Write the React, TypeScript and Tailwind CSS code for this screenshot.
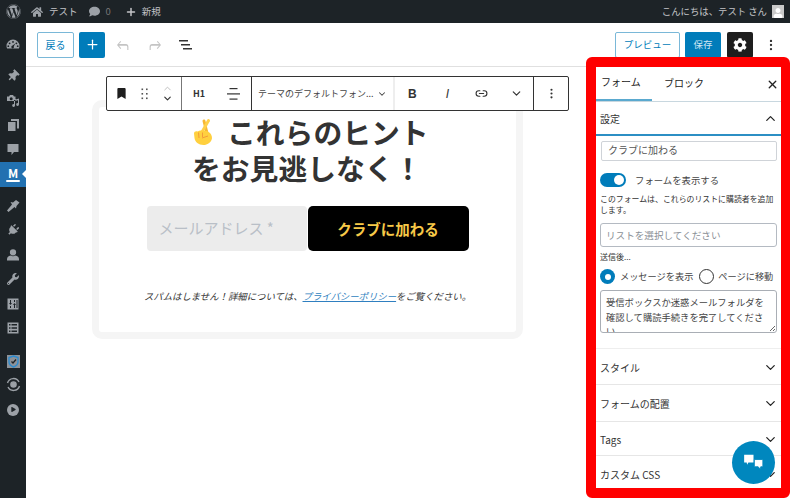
import { ChevronDown, ChevronUp, Link2, MoreVertical, Plus, X } from 'lucide-react';
import { FaBookmark, FaCog, FaComment, FaHome, FaPlay, FaPlug, FaThumbtack, FaUser, FaWordpress, FaWrench } from 'react-icons/fa';
import type { ReactNode } from 'react';

function NavItem({ children, className = '' }: { children: ReactNode; className?: string }) {
  return <div className={`flex h-[24.5px] items-center justify-center text-[#9ca1a7] ${className}`}>{children}</div>;
}

function Section({ title, className = '' }: { title: string; className?: string }) {
  return (
    <div className={`flex items-center justify-between border-b border-[#e6e6e6] pl-[4px] pr-[3px] pt-[1px] text-[10px] text-[#333] ${className}`}>
      <span>{title}</span>
      <ChevronDown size={15} strokeWidth={2} className="text-[#222]" />
    </div>
  );
}

function Handle() {
  return (
    <svg width="8" height="12" viewBox="0 0 8 12" className="fill-[#555]">
      <rect x="0.5" y="0.5" width="1.6" height="1.6" /><rect x="5" y="0.5" width="1.6" height="1.6" />
      <rect x="0.5" y="5" width="1.6" height="1.6" /><rect x="5" y="5" width="1.6" height="1.6" />
      <rect x="0.5" y="9.5" width="1.6" height="1.6" /><rect x="5" y="9.5" width="1.6" height="1.6" />
    </svg>
  );
}

function FingersCrossed() {
  return (
    <svg width="20" height="27" viewBox="0 0 20 27" fill="none">
      <path d="M11 3 14 15" stroke="#f7b733" strokeWidth="3" strokeLinecap="round" />
      <path d="M15.5 2.5 8.5 15" stroke="#ffd04a" strokeWidth="3" strokeLinecap="round" />
      <path d="M1 15.5C1 13.5 3 13 4.5 13.5L7 12.5 14 13 17 15C19 17.5 19.5 20 18.5 22 17 25.5 13.5 27 10.5 27 5.5 27 2 24 1.5 20Z" fill="#ffd03f" />
      <path d="M5.5 14.5 6 20M9.5 14.5 9.5 19M9 20 15 18" stroke="#f0953a" strokeWidth="0.9" />
    </svg>
  );
}

function Dash({ d }: { d: string }) {
  return (
    <svg width="14" height="14" viewBox="0 0 14 14" className="fill-current" fillRule="evenodd">
      <path d={d} />
    </svg>
  );
}

export default function App() {
  return (
    <div className="relative flex h-[498px] w-[790px] flex-col overflow-hidden bg-white font-['Noto_Sans_CJK_JP','Noto_Sans',sans-serif]">
      <div className="flex h-[23px] shrink-0 items-center bg-[#1d2327] text-[9.5px] text-[#c3c4c7]">
        <div className="flex w-[26px] justify-center"><FaWordpress size={15} className="text-[#9ca1a7]" /></div>
        <div className="ml-[5px] flex items-center gap-[6px]"><FaHome size={12} className="text-[#9ca1a7]" />テスト</div>
        <div className="ml-[11px] flex items-center gap-[6px] text-[#777]"><FaComment size={11} className="text-[#9ca1a7]" />0</div>
        <div className="ml-[14px] flex items-center gap-[5px]"><Plus size={12} strokeWidth={3} className="text-[#c3c4c7]" />新規</div>
        <div className="ml-auto mr-[6px] flex items-center gap-[5px]">
          <span className="text-[9.4px]">こんにちは、テスト さん</span>
          <span className="flex h-[13px] w-[12px] items-end justify-center overflow-hidden bg-[#c9c9c9]"><FaUser size={10} className="text-white" /></span>
        </div>
      </div>

      <div className="flex min-h-0 flex-1">
        <nav className="flex w-[26px] shrink-0 flex-col bg-[#1d2327] pt-[9px]">
          <NavItem><Dash d="M7 2.5A6.5 6.5 0 0 0 .5 9c0 1 .2 1.8.6 2.5h11.8c.4-.7.6-1.5.6-2.5A6.5 6.5 0 0 0 7 2.5ZM7 4a.9.9 0 1 1 0 1.8A.9.9 0 0 1 7 4ZM3.6 5.4a.9.9 0 1 1 0 1.8.9.9 0 0 1 0-1.8ZM10.4 5.4a.9.9 0 1 1 0 1.8.9.9 0 0 1 0-1.8ZM9.4 6.6 7.8 9.3a1.3 1.3 0 1 1-1.2-.7ZM2.3 8.3a.9.9 0 1 1 0 1.8.9.9 0 0 1 0-1.8ZM11.7 8.3a.9.9 0 1 1 0 1.8.9.9 0 0 1 0-1.8Z" /></NavItem>
          <NavItem className="mt-[7px]"><FaThumbtack size={12} className="rotate-45" /></NavItem>
          <NavItem><Dash d="M1 3.5h2L4 2h3l1 1.5h1.5V8H1ZM5.2 4.2a1.5 1.5 0 1 0 0 3 1.5 1.5 0 0 0 0-3ZM13 5.5V11.5a1.4 1.4 0 1 1-1-1.3V7.2L9 8v4.5a1.4 1.4 0 1 1-1-1.3V7Z" /></NavItem>
          <NavItem><Dash d="M5 1h8v9.5h-2V3H5ZM2 4h7.5v9H2Z" /></NavItem>
          <NavItem><Dash d="M1.5 2h11v8H8l-2.5 3V10h-4Z" /></NavItem>
          <div className="relative flex h-[25px] flex-col items-center justify-center bg-[#2271b1] text-white">
            <span className="text-[12px] font-bold leading-[12px]">M</span>
            <span className="mt-[1px] h-[2px] w-[14px] rounded-full bg-white" />
            <span className="absolute right-0 top-[8px] h-0 w-0 border-y-[4px] border-r-[4px] border-y-transparent border-r-white" />
          </div>
          <NavItem className="mt-[7px]"><Dash d="M13.5 3.5 10 1 7 3.5 4.5 3 6 5.5 1 11.5 2.5 13 8.5 8 10 9.5 10.5 7Z" /></NavItem>
          <NavItem><FaPlug size={12} className="rotate-45" /></NavItem>
          <NavItem><Dash d="M7 1.2a3 3 0 1 1 0 6.3 3 3 0 0 1 0-6.3ZM4.5 7.6C5.5 8.4 8.5 8.4 9.5 7.6 11.5 8 13 9.2 13 11.2V12.5H1V11.2C1 9.2 2.5 8 4.5 7.6Z" /></NavItem>
          <NavItem><FaWrench size={12} /></NavItem>
          <NavItem><Dash d="M1.5 1.5h11v11h-11ZM4 3v3H3l1.5 2L6 6H5V3ZM4 9v2h1V9ZM9 11V8h1L8.5 6 7 8h1v3ZM8 3v2h1V3ZM10.5 3v8h1V3Z" /></NavItem>
          <NavItem><Dash d="M1.5 1.5h11v11h-11ZM3 3v1.5h1.5V3ZM5.5 3v1.5H11V3ZM3 6.2v1.5h1.5V6.2ZM5.5 6.2v1.5H11V6.2ZM3 9.5V11h1.5V9.5ZM5.5 9.5V11H11V9.5Z" /></NavItem>
          <NavItem className="mt-[9px]">
            <svg width="13" height="13" viewBox="0 0 13 13">
              <rect width="13" height="13" fill="#8d9298" />
              <path d="M6.5 1 11 2.5V7C11 9.5 9 11 6.5 12 4 11 2 9.5 2 7V2.5Z" fill="none" stroke="#2e8ccf" strokeWidth="1.4" />
              <path d="M4.5 6.5 6 8 9 4.5" fill="none" stroke="#1d2327" strokeWidth="1.3" />
            </svg>
          </NavItem>
          <NavItem className="-mt-[2px]">
            <svg width="15" height="15" viewBox="0 0 15 15" fill="none" stroke="#9ca1a7" strokeWidth="1.4">
              <path d="M1.5 6A6.2 6.2 0 0 1 13 5M13.5 9A6.2 6.2 0 0 1 2 10" />
              <circle cx="7.5" cy="7.5" r="2.6" fill="#9ca1a7" />
            </svg>
          </NavItem>
          <NavItem className="mt-[1px]">
            <span className="flex h-[12px] w-[12px] items-center justify-center rounded-full bg-[#9ca1a7]"><FaPlay size={5} className="text-[#1d2327]" /></span>
          </NavItem>
        </nav>

        <div className="flex min-w-0 flex-1 flex-col">
          <header className="flex h-[44px] shrink-0 items-center border-b border-[#e0e0e0] pl-[11px] pr-[12px]">
            <button className="h-[26px] w-[37px] rounded-[2px] border border-[#7ab8d8] text-[10px] text-[#007cba]">戻る</button>
            <button className="ml-[5px] flex h-[26px] w-[26px] items-center justify-center rounded-[2px] bg-[#007cba] text-white"><Plus size={15} strokeWidth={2} /></button>
            <svg width="18" height="18" viewBox="0 0 24 24" className="ml-[9px] fill-[#c4c4c4]"><path d="M18.3 11.7c-.6-.6-1.4-.9-2.3-.9H6.7l2.9-3.3-1.1-1-4.5 5.4 4.5 5.3 1.1-1-2.9-3.3H16c.5 0 .9.2 1.2.5.3.3.5.7.5 1.2v4.2h1.5v-4.2c0-1.2-.2-2.1-.9-2.9z" /></svg>
            <svg width="18" height="18" viewBox="0 0 24 24" className="ml-[14px] fill-[#c4c4c4]"><path d="M15.6 6.5l-1.1 1 2.9 3.3H8c-.9 0-1.7.3-2.3.9-.7.8-.9 1.7-.9 2.9v4.2h1.5v-4.2c0-.5.2-.9.5-1.2.3-.3.7-.5 1.2-.5h9.3l-2.9 3.3 1.1 1 4.5-5.3-4.4-5.4z" /></svg>
            <svg width="14" height="12" viewBox="0 0 14 12" className="ml-[15px] fill-[#333]"><rect x="0" y="1" width="9" height="1.5" /><rect x="2" y="5" width="9" height="1.5" /><rect x="4" y="9" width="9" height="1.5" /></svg>
            <button className="ml-auto h-[26px] w-[65px] rounded-[2px] border border-[#7ab8d8] text-[9.5px] text-[#007cba]">プレビュー</button>
            <button className="ml-[5px] h-[26px] w-[36px] rounded-[2px] bg-[#007cba] text-[9.5px] text-[#cfe6f2]">保存</button>
            <button className="ml-[6px] flex h-[26px] w-[26px] items-center justify-center rounded-[2px] bg-[#1e1e1e] text-white"><FaCog size={14} /></button>
            <MoreVertical size={14} strokeWidth={2} className="ml-[11px] text-[#333]" />
          </header>

          <div className="relative flex min-h-0 flex-1">
            <main className="min-w-0 flex-1 pl-[66px] pt-[33px]">
              <div className="h-[239px] w-[431px] rounded-[10px] border-[7px] border-[#f5f5f5] bg-white pt-[7px]">
                <h1 className="ml-[94px] flex w-[240px] flex-wrap items-center text-[28.8px] font-bold leading-[35px] text-[#333]">
                  <FingersCrossed />
                  <span className="ml-[14px]">これらのヒント</span>
                  <span className="-ml-[1px] mt-[1px]">をお見逃しなく！</span>
                </h1>
                <div className="ml-[47.5px] mt-[21px] flex gap-px">
                  <div className="flex h-[45px] w-[160px] items-center rounded-[4px] bg-[#ececec] pl-[12px] text-[15px] text-[#b9bfc7]">メールアドレス *</div>
                  <button className="h-[45px] w-[161px] rounded-[5px] bg-black text-[14.5px] font-bold text-[#f7c948]">クラブに加わる</button>
                </div>
                <p className="mt-[38px] text-center text-[9.4px] italic leading-[14px] text-[#333]">
                  スパムはしません！詳細については、<a className="text-[#2f7fc0] underline">プライバシーポリシー</a>をご覧ください。
                </p>
              </div>
            </main>

            <aside className="relative z-10 -mt-[10px] h-[441px] w-[204px] shrink-0 overflow-hidden rounded-[6px] border-[10px] border-r-[9px] border-[#ff0000] bg-white">
              <div className="flex h-[35px] items-center border-b border-[#c8d7df] text-[10px] text-[#222]">
                <span className="flex h-full w-[56px] items-center border-b-2 border-[#5aa9cf] pb-[3px] pl-[5px]">フォーム</span>
                <span className="-mt-[3px] ml-[12px]">ブロック</span>
                <X size={13} strokeWidth={2.5} className="ml-auto mr-[2px]" />
              </div>
              <div className="flex h-[34px] items-center justify-between border-b-2 border-[#2c8fc4] pl-[4px] pr-[3px] text-[10px] text-[#333]">
                <span>設定</span>
                <ChevronUp size={15} strokeWidth={2} className="text-[#222]" />
              </div>
              <div className="px-[4px] pt-[5px] text-[#333]">
                <div className="ml-[1px] flex h-[20px] items-center rounded-[2px] border border-[#cfd3d8] pb-[3px] pl-[6px] text-[10px] text-[#555]">クラブに加わる</div>
                <div className="mt-[12px] flex h-[14px] items-center text-[9.4px] text-[#444]">
                  <span className="flex h-[14px] w-[26px] items-center justify-end rounded-full bg-[#007cba] pr-[2px]"><span className="h-[10px] w-[10px] rounded-full bg-white" /></span>
                  <span className="ml-[9px]">フォームを表示する</span>
                </div>
                <p className="mt-[6px] text-[7.9px] leading-[11px] text-[#333]">このフォームは、これらのリストに購読者を追加します。</p>
                <div className="mt-[8px] flex h-[24px] items-center rounded-[3px] border border-[#b4bac2] pl-[5px] text-[9.6px] text-[#8a8f96]">リストを選択してください</div>
                <p className="mt-[4px] text-[8px] leading-[12px]">送信後...</p>
                <div className="mt-[5px] flex h-[17px] items-center text-[9.2px] text-[#444]">
                  <span className="flex h-[15px] w-[15px] items-center justify-center rounded-full bg-[#007cba]"><span className="h-[6px] w-[6px] rounded-full bg-white" /></span>
                  <span className="ml-[5px]">メッセージを表示</span>
                  <span className="ml-[6px] h-[15px] w-[15px] rounded-full border border-[#333]" />
                  <span className="ml-[4px]">ページに移動</span>
                </div>
                <div className="relative mt-[5px] h-[43px] overflow-hidden rounded-[3px] border border-[#a9aeb5] pl-[5px] pr-[11px] pt-[4px] text-[9.3px] leading-[14.5px] text-[#444]">
                  受信ボックスか迷惑メールフォルダを確認して購読手続きを完了してください。
                  <svg width="5" height="5" viewBox="0 0 5 5" className="absolute bottom-[1px] right-[1px] stroke-[#666]"><path d="M0 5 5 0M3 5 5 3" /></svg>
                </div>
              </div>
              <div className="mt-[15px] border-t border-[#eeeeee]">
                <Section title="スタイル" className="h-[36px]" />
                <Section title="フォームの配置" className="h-[37px]" />
                <Section title="Tags" className="h-[34px]" />
                <Section title="カスタム CSS" className="h-[36px] border-b-0" />
              </div>
            </aside>
          </div>
        </div>
      </div>

      <div className="absolute left-[106px] top-[76px] flex h-[35px] w-[463px] items-center rounded-[2px] border border-[#333] bg-white text-[#333]">
        <div className="flex h-full w-[75px] items-center border-r border-[#777] pl-[9px]">
          <FaBookmark size={11} className="text-[#1e1e1e]" />
          <span className="ml-[14px]"><Handle /></span>
          <span className="ml-[13px] flex flex-col items-center">
            <ChevronUp size={11} className="-mb-[1px] text-[#bbb]" />
            <ChevronDown size={11} className="text-[#333]" strokeWidth={2.5} />
          </span>
        </div>
        <div className="flex h-full w-[70px] items-center border-r border-[#333] pl-[11px]">
          <span className="text-[9px] font-bold">H1</span>
          <svg width="13" height="12" viewBox="0 0 13 12" className="ml-[22px] fill-[#333]"><rect x="2.5" y="0" width="8" height="1.2" /><rect x="0" y="5.3" width="13" height="1.2" /><rect x="2.5" y="10.5" width="8" height="1.2" /></svg>
        </div>
        <div className="flex h-full w-[143px] items-center border-r-2 border-[#eeeeee] pl-[6px] text-[9px] text-[#444]">
          <span>テーマのデフォルトフォン...</span>
          <ChevronDown size={10} strokeWidth={2.5} className="ml-[3px]" />
        </div>
        <div className="flex h-full w-[139px] items-center border-r border-[#333]">
          <span className="ml-[13px] font-['Liberation_Sans',sans-serif] text-[12px] font-bold">B</span>
          <span className="ml-[29px] font-['Liberation_Sans',sans-serif] text-[12px] italic">I</span>
          <Link2 size={13} className="ml-[26px]" />
          <ChevronDown size={13} strokeWidth={2.2} className="ml-[22px]" />
        </div>
        <MoreVertical size={13} strokeWidth={2} className="ml-[11px]" />
      </div>

      <div className="absolute left-[732px] top-[441px] z-20 flex h-[43px] w-[43px] items-center justify-center rounded-full bg-[#0087be]">
        <svg width="21" height="17" viewBox="0 0 24 20" className="fill-white">
          <path d="M1 1H12V10H6L4.5 12.5 4 10H1Z" />
          <path d="M13 6.5H23V15H20.5L20 18 17.5 15H13Z" stroke="#0087be" strokeWidth="1" />
        </svg>
      </div>
    </div>
  );
}
